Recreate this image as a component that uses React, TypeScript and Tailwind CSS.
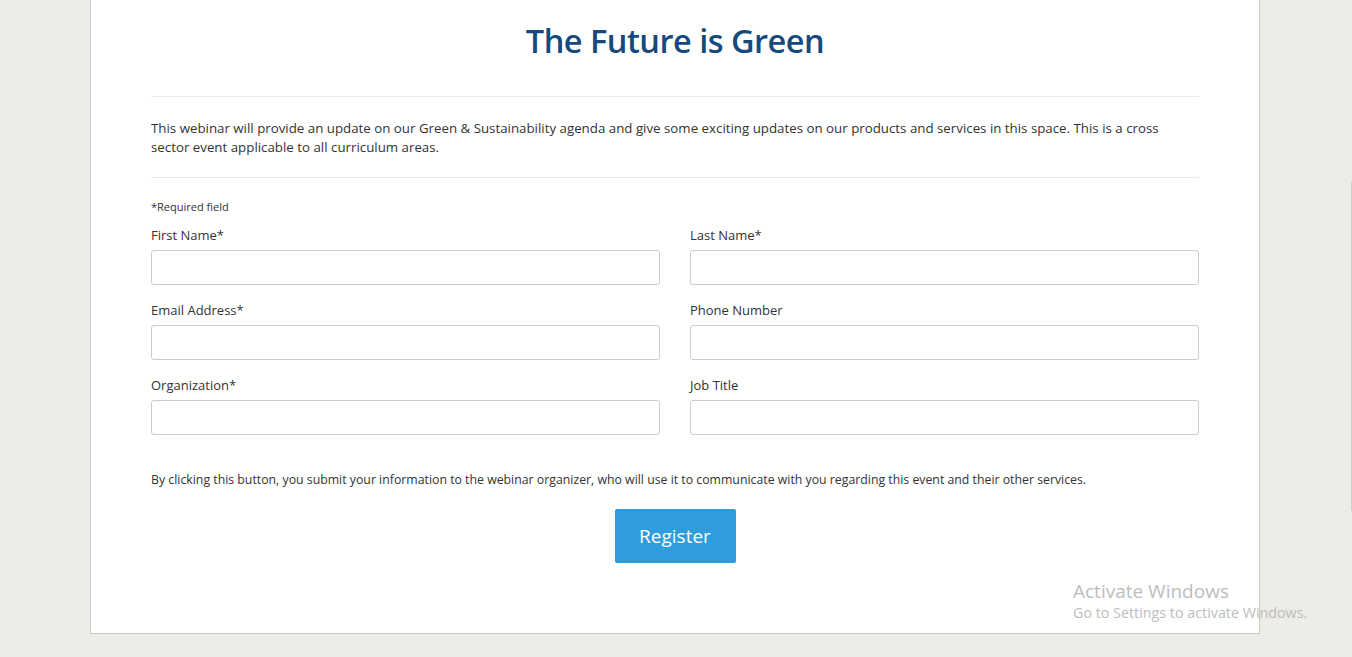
import React from 'react';

const fields: { label: string }[][] = [
  [{ label: 'First Name*' }, { label: 'Last Name*' }],
  [{ label: 'Email Address*' }, { label: 'Phone Number' }],
  [{ label: 'Organization*' }, { label: 'Job Title' }],
];

const App: React.FC = () => {
  return (
    <div
      className="min-h-[657px] bg-[#edece6] relative overflow-hidden"
      style={{ fontFamily: '"Open Sans", "Noto Sans", sans-serif' }}
    >
      <div className="ml-[90px] w-[1170px] bg-white border-x border-b border-[#c8c8c8] px-[60px] pt-[19px] pb-[70px]">
        <h1 className="text-center text-[32.5px] leading-[44px] font-semibold text-[#174a7c] tracking-[-0.5px]">
          The Future is Green
        </h1>

        <div className="mt-[33px] border-t border-[#ebebeb]" />

        <p className="mt-[22px] text-[13.3px] leading-[19px] text-[#333]">
          This webinar will provide an update on our Green &amp; Sustainability agenda and give some exciting updates on our products and services in this space. This is a cross sector event applicable to all curriculum areas.
        </p>

        <div className="mt-[20px] border-t border-[#ebebeb]" />

        <div className="mt-[21px] text-[11px] leading-[16px] text-[#333]">*Required field</div>

        <div className="mt-[10px] flex flex-col gap-[15px]">
          {fields.map((row, i) => (
            <div key={i} className="grid grid-cols-2 gap-[30px]">
              {row.map(f => (
                <div key={f.label}>
                  <label className="block text-[13px] leading-[20px] text-[#333]">{f.label}</label>
                  <input
                    type="text"
                    className="mt-[5px] block w-full h-[35px] border border-[#cccccc] rounded-[3px] bg-white outline-none"
                  />
                </div>
              ))}
            </div>
          ))}
        </div>

        <p className="mt-[36px] text-[12.3px] leading-[18px] text-[#333]">
          By clicking this button, you submit your information to the webinar organizer, who will use it to communicate with you regarding this event and their other services.
        </p>

        <div className="mt-[20px] flex justify-center">
          <button className="w-[121px] h-[54px] bg-[#2f9ddc] text-white text-[19px] rounded-[2px]">
            Register
          </button>
        </div>
      </div>

      <div className="absolute right-0 top-[181px] h-[330px] w-px bg-[#cfcfcf]" />

      <div className="absolute left-[1073px] top-[578px] text-[#bdbdbd] pointer-events-none">
        <div className="text-[19px] leading-[26px]">Activate Windows</div>
        <div className="text-[14.3px] leading-[20px] mt-[-1px]">Go to Settings to activate Windows.</div>
      </div>
    </div>
  );
};

export default App;
